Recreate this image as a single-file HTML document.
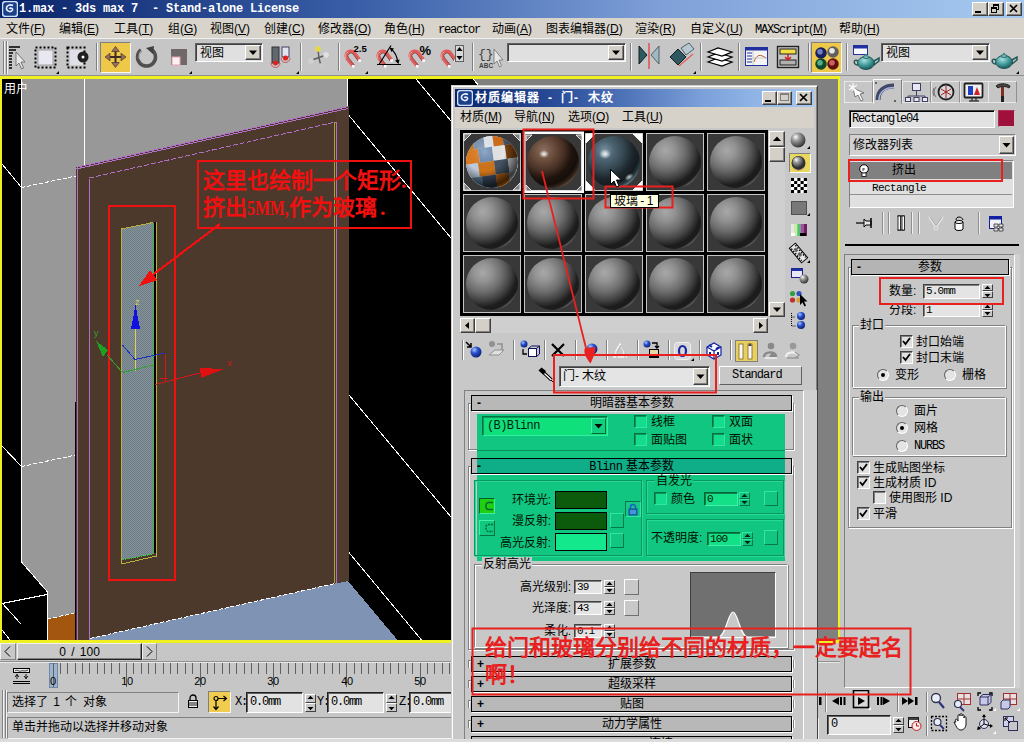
<!DOCTYPE html><html lang="zh-CN"><head><meta charset="utf-8"><title>3ds max</title><style>
*{box-sizing:border-box;margin:0;padding:0}
html,body{width:1024px;height:742px;overflow:hidden;background:#c8c8c8}
body{font-family:"Liberation Sans",sans-serif;font-size:12px;color:#000;position:relative}
#root{position:absolute;left:0;top:0;width:1024px;height:742px;overflow:hidden;background:#c8c8c8}
.a{position:absolute}
.t{position:absolute;white-space:nowrap;font-size:12px;line-height:14px;color:#000}
.m{font-family:"Liberation Mono",monospace;letter-spacing:-1.2px}
.sunk{position:absolute;border:1px solid;border-color:#404040 #fff #fff #404040;background:#e4e4e4}
.rais{position:absolute;border:1px solid;border-color:#fff #404040 #404040 #fff;background:#c8c8c8}
.grp{position:absolute;border:1px solid;border-color:#808080 #fff #fff #808080;box-shadow:inset 1px 1px 0 #fff, 1px 1px 0 #808080}
.hdr{position:absolute;background:#b4b4b4;border:1px solid #000;box-shadow:1px 1px 0 #fff}
.cb{position:absolute;width:13px;height:13px;border:1px solid;border-color:#404040 #fff #fff #404040;background:#e0e0e0;box-shadow:inset 1px 1px 0 #808080}
.rad{position:absolute;width:12px;height:12px;border-radius:50%;border:1px solid;border-color:#606060 #fff #fff #606060;background:#e4e4e4}
</style></head><body><div id="root">
<div class="a" style="left:0;top:0;width:1024px;height:18px;background:linear-gradient(90deg,#0a246a 0%,#3a5fa8 35%,#7fa0d8 65%,#a6caf0 100%)"></div>
<div class="t m" style="left:19px;top:2px;color:#fff;font-weight:bold;font-size:12px;letter-spacing:-0.2px;white-space:pre">1.max - 3ds max 7  - Stand-alone License</div>
<div class="a" style="left:0;top:18px;width:1024px;height:21px;background:#d8d4cc"></div>
<div class="a" style="left:0;top:39px;width:1024px;height:38px;background:#c6c6c6"></div>
<div class="a" style="left:0;top:76px;width:840px;height:567px;background:#f0f020"></div>
<svg class="a" style="left:2px;top:79px" width="836" height="561" viewBox="2 79 836 561" shape-rendering="crispEdges">
<rect x="2" y="79" width="836" height="561" fill="#000"/>
<polygon points="21,79 348,79 348,640 21,640" fill="#989898"/>
<polygon points="21,562 47,592 47,640 21,640" fill="#000"/>
<polygon points="47,619 76,613 76,640 47,640" fill="#a2560f"/>
<polygon points="90,638 335,583 348,581 397.5,640 90,640" fill="#7f94b4"/>
<polygon points="76,167 348.5,106 348.5,581 335,583.5 90,638.5 90,640 76,640" fill="#4c392b"/>
<polygon points="336,109 348.5,106 348.5,581 336,583.5" fill="#503c2e"/>
<rect x="817" y="79" width="21" height="561" fill="#808080"/>
<polygon points="473,79 838,79 838,87 480,87" fill="#808080"/><path d="M473,79L480,87" stroke="#fff"/>
<g stroke="#fff" stroke-width="1" fill="none">
<path d="M21.5,79V562 M84.5,79V165 M347.5,79V106"/>
<path d="M2,164L21.5,187.5 M2,446L21.5,466.5 M21.5,562L47.5,592V640 M2,603.5L47,594.5 M2,603L21,624 M2,630L10,640"/>
<path d="M416,79L451,121 M349,115.5L451,238 M349,395L451,517 M349,552.5L421.5,640"/>
<path d="M21.5,187.5L76,176 M21.5,466.5L76,455 M47,619L76,613 M90,638.5L335,583.5" stroke-dasharray="4 2"/>
</g>
<g stroke="#b070c8" stroke-width="1" fill="none">
<path d="M77.5,640V167L348.5,106.5 M76,169L348,108.5"/>
<path d="M89.5,640V178.5"/>
<path d="M89.5,178L335.5,122" stroke-dasharray="5 2"/>
<path d="M336.5,122V583"/>
</g>
<path d="M334.5,122V583" stroke="#b0a030" stroke-width="1" fill="none"/>
<path d="M75.5,402V640" stroke="#000" stroke-width="1" fill="none"/>
<defs><pattern id="dith" width="2" height="2" patternUnits="userSpaceOnUse"><rect width="2" height="2" fill="#84929a"/><rect width="1" height="1" fill="#6e7c86"/><rect x="1" y="1" width="1" height="1" fill="#6e7c86"/></pattern></defs>
<polygon points="121,229 153.5,222.5 153.5,554 121,560" fill="url(#dith)"/>
<path d="M121.5,564V229L153,222.5 M121.5,564L156.5,556V222" stroke="#b8b040" stroke-width="1" fill="none"/>
<path d="M154.8,222V553" stroke="#000" stroke-width="1.6" fill="none"/>
<path d="M153.5,224V554L122,560" stroke="#20e020" stroke-width="1" stroke-dasharray="1 1" fill="none"/>
<rect x="109" y="205.500" width="66" height="374" stroke="#f01010" stroke-width="2" fill="none"/>
<rect x="197.5" y="160.5" width="213.500" height="67.500" stroke="#f01010" stroke-width="2" fill="none"/>
<path d="M220,224L146,280" stroke="#f01010" stroke-width="2.200" fill="none"/>
<polygon points="139,286 150,270 157,280" fill="#f01010"/>
<path d="M135.5,329V371" stroke="#e0d050" stroke-width="1.200" fill="none"/>
<polygon points="135.5,305 131,329 140,329" fill="#1010e0"/>
<path d="M122.5,345L135,359.500L165,353" stroke="#2030c0" stroke-width="1" fill="none"/>
<path d="M107,355L122.500,372.500L153,365" stroke="#30a030" stroke-width="1" fill="none"/>
<polygon points="96,341 108,350 103,357" fill="#20a020"/>
<path d="M155,384.500L200,373 M165,354V382 M160,378H168" stroke="#d01818" stroke-width="1" fill="none"/>
<polygon points="224,369 200,368 201,378" fill="#e01010"/>
</svg>
<div class="t" style="left:4px;top:82px;color:#fff">用户</div>
<div class="t" style="left:135px;top:295px;color:#e0d050;font-size:9px">z</div>
<div class="t" style="left:94px;top:326px;color:#30a030;font-size:9px">y</div>
<div class="t" style="left:227px;top:356px;color:#d01818;font-size:9px">x</div>
<div class="t" style="left:203px;top:168px;font-family:'Liberation Serif',serif;font-weight:bold;color:#f01010;font-size:22px;line-height:26px">这里也绘制一个矩形.</div>
<div class="t" style="left:203px;top:195px;font-family:'Liberation Serif',serif;font-weight:bold;color:#f01010;font-size:22px;line-height:26px">挤出<span style="display:inline-block;transform:scaleX(0.72);transform-origin:0 0;margin-right:-16px">5MM,</span>作为玻璃<span style="margin-left:3px">.</span></div>
<div class="a" style="left:0;top:643px;width:840px;height:99px;background:#c6c6c6"></div>
<div class="a" style="left:840px;top:688px;width:184px;height:54px;background:#c6c6c6"></div>
<div class="rais" style="left:0;top:643px;width:16px;height:17px;border-color:#f0f0f0 #808080 #808080 #f0f0f0"></div>
<div class="rais" style="left:17px;top:643px;width:125px;height:17px;border-color:#f0f0f0 #202020 #202020 #f0f0f0;box-shadow:inset -1px -1px 0 #808080"></div>
<div class="rais" style="left:142px;top:643px;width:15px;height:17px;border-color:#f0f0f0 #808080 #808080 #f0f0f0"></div>
<div class="t" style="left:17px;top:645px;width:125px;text-align:center;word-spacing:2px">0 / 100</div>
<svg class="a" style="left:0;top:643px" width="160" height="17"><path d="M10,3.500L5,8.500 10,13.500 M147,3.500L152,8.500 147,13.500" stroke="#000" stroke-width="1" fill="none"/></svg>
<div class="a" style="left:0;top:661px;width:840px;height:1px;background:#909090"></div>
<div class="a" style="left:0;top:662px;width:840px;height:1px;background:#e8e8e8"></div>
<svg class="a" style="left:0;top:662px" width="460" height="30" viewBox="0 662 460 30">
<rect x="49.500" y="663.500" width="8" height="24" fill="#9cb4cc" stroke="#7088a8"/>
<path d="M53.5,663V687 M60.5,663V674 M67.5,663V674 M75.5,663V674 M82.5,663V674 M89.5,663V674 M97.5,663V674 M104.5,663V674 M111.5,663V674 M119.5,663V674 M126.5,663V687 M133.5,663V674 M141.5,663V674 M148.5,663V674 M155.5,663V674 M163.5,663V674 M170.5,663V674 M177.5,663V674 M185.5,663V674 M192.5,663V674 M200.5,663V687 M207.5,663V674 M214.5,663V674 M222.5,663V674 M229.5,663V674 M236.5,663V674 M244.5,663V674 M251.5,663V674 M258.5,663V674 M266.5,663V674 M273.5,663V687 M280.5,663V674 M288.5,663V674 M295.5,663V674 M302.5,663V674 M310.5,663V674 M317.5,663V674 M324.5,663V674 M332.5,663V674 M339.5,663V674 M346.5,663V687 M354.5,663V674 M361.5,663V674 M368.5,663V674 M376.5,663V674 M383.5,663V674 M390.5,663V674 M398.5,663V674 M405.5,663V674 M412.5,663V674 M420.5,663V687 M427.5,663V674 M434.5,663V674 M442.5,663V674 M449.5,663V674 M456.5,663V674" stroke="#606060" stroke-width="1"/>
<rect x="13.500" y="668.500" width="16" height="4" fill="#e8e8e8" stroke="#000"/><path d="M15,671c2,-2 4,1 6,0 2,-1 4,1 7,-1" stroke="#000" stroke-width="0.700" fill="none"/><path d="M13,681.500h17 M13,683.500h17" stroke="#000"/><path d="M17,674v5 M15,677l2,-2.500 2,2.500 M26,674v5 M24,676l2,2.500 2,-2.500" stroke="#000" stroke-width="0.900" fill="none"/>
</svg>
<div class="t" style="left:38px;top:674px;width:30px;text-align:center;font-size:11px;letter-spacing:-0.3px">0</div>
<div class="t" style="left:112px;top:674px;width:30px;text-align:center;font-size:11px;letter-spacing:-0.3px">10</div>
<div class="t" style="left:185px;top:674px;width:30px;text-align:center;font-size:11px;letter-spacing:-0.3px">20</div>
<div class="t" style="left:258px;top:674px;width:30px;text-align:center;font-size:11px;letter-spacing:-0.3px">30</div>
<div class="t" style="left:332px;top:674px;width:30px;text-align:center;font-size:11px;letter-spacing:-0.3px">40</div>
<div class="t" style="left:405px;top:674px;width:30px;text-align:center;font-size:11px;letter-spacing:-0.3px">50</div>
<svg class="a" style="left:0;top:689px" width="8" height="52"><path d="M2.500,1v48 M5.500,1v48" stroke="#808080"/><path d="M3.500,1v48 M6.500,1v48" stroke="#f4f4f4"/></svg>
<div class="sunk" style="left:7px;top:692px;width:172px;height:21px;background:#c6c6c6;border-color:#808080 #f4f4f4 #f4f4f4 #808080"></div>
<div class="t" style="left:12px;top:695px;word-spacing:2px">选择了 1 个 对象</div>
<div class="sunk" style="left:7px;top:717px;width:812px;height:22px;background:#c6c6c6;border-color:#808080 #f4f4f4 #f4f4f4 #808080"></div>
<div class="t" style="left:12px;top:720px">单击并拖动以选择并移动对象</div>
<svg class="a" style="left:186px;top:694px" width="14" height="16"><path d="M4,6v-2a3,3 0 0 1 6,0v2" stroke="#000" stroke-width="1.300" fill="none"/><rect x="2.500" y="6.500" width="9" height="7" fill="#f0f0f0" stroke="#000"/><path d="M3,9h8 M3,11h8" stroke="#000" stroke-width="0.900"/></svg>
<div class="a" style="left:208px;top:691px;width:23px;height:22px;background:#f0cc50;border:1px solid;border-color:#808080 #f8f8f8 #f8f8f8 #808080"></div>
<svg class="a" style="left:208px;top:691px" width="23" height="22"><circle cx="8" cy="7.500" r="2" fill="none" stroke="#000" stroke-width="1.200"/><path d="M10,7.500h8 M15.500,5l3,2.500 -3,2.500 M8,10v8 M5.500,15.500l2.500,3 2.500,-3" stroke="#000" stroke-width="1.200" fill="none"/></svg>
<div class="t m" style="left:235px;top:695px;font-size:12px">X:</div>
<div class="sunk" style="left:246px;top:692px;width:57px;height:21px;background:#e2e2e2;border-color:#202020 #fff #fff #202020;box-shadow:inset 1px 1px 0 #606060"></div>
<div class="t m" style="left:250px;top:695px">0.0mm</div>
<div class="a" style="left:305px;top:694px;width:11px;height:9px;background:#c8c8c8;border:1px solid;border-color:#fff #404040 #404040 #fff"></div>
<div class="a" style="left:305px;top:703px;width:11px;height:9px;background:#c8c8c8;border:1px solid;border-color:#fff #404040 #404040 #fff"></div>
<svg class="a" style="left:305px;top:694px" width="11" height="18"><polygon points="5.500,1.800 8.500,5 2.500,5" fill="#000"/><polygon points="5.500,16.2 8.500,13 2.500,13" fill="#000"/></svg>
<div class="t m" style="left:317px;top:695px;font-size:12px">Y:</div>
<div class="sunk" style="left:327px;top:692px;width:57px;height:21px;background:#e2e2e2;border-color:#202020 #fff #fff #202020;box-shadow:inset 1px 1px 0 #606060"></div>
<div class="t m" style="left:331px;top:695px">0.0mm</div>
<div class="a" style="left:386px;top:694px;width:11px;height:9px;background:#c8c8c8;border:1px solid;border-color:#fff #404040 #404040 #fff"></div>
<div class="a" style="left:386px;top:703px;width:11px;height:9px;background:#c8c8c8;border:1px solid;border-color:#fff #404040 #404040 #fff"></div>
<svg class="a" style="left:386px;top:694px" width="11" height="18"><polygon points="5.500,1.800 8.500,5 2.500,5" fill="#000"/><polygon points="5.500,16.2 8.500,13 2.500,13" fill="#000"/></svg>
<div class="t m" style="left:399px;top:695px;font-size:12px">Z:</div>
<div class="sunk" style="left:409px;top:692px;width:60px;height:21px;background:#e2e2e2;border-color:#202020 #fff #fff #202020;box-shadow:inset 1px 1px 0 #606060"></div>
<div class="t m" style="left:413px;top:695px">0.0mm</div>
<div class="a" style="left:471px;top:694px;width:11px;height:9px;background:#c8c8c8;border:1px solid;border-color:#fff #404040 #404040 #fff"></div>
<div class="a" style="left:471px;top:703px;width:11px;height:9px;background:#c8c8c8;border:1px solid;border-color:#fff #404040 #404040 #fff"></div>
<svg class="a" style="left:471px;top:694px" width="11" height="18"><polygon points="5.500,1.800 8.500,5 2.500,5" fill="#000"/><polygon points="5.500,16.2 8.500,13 2.500,13" fill="#000"/></svg>
<svg class="a" style="left:818px;top:688px" width="206" height="54" viewBox="818 688 206 54">
<path d="M825.5,692v20" stroke="#808080"/><path d="M826.5,692v20" stroke="#f4f4f4"/>
<path d="M897.5,692v20" stroke="#808080"/><path d="M898.5,692v20" stroke="#f4f4f4"/>
<path d="M926.5,692v20" stroke="#808080"/><path d="M927.5,692v20" stroke="#f4f4f4"/>
<path d="M926.5,716v20" stroke="#808080"/><path d="M927.5,716v20" stroke="#f4f4f4"/>
<rect x="819" y="697" width="2.500" height="8" fill="#000"/>
<path d="M832,701l7,-4v8z" fill="#000"/><rect x="840" y="697" width="2" height="8" fill="#000"/><rect x="843.500" y="697" width="2" height="8" fill="#000"/>
<rect x="853.500" y="690.500" width="15" height="17" fill="#d8d8d8" stroke="#000" stroke-width="1.600"/><path d="M858,697v8l7,-4z" fill="#000"/><path d="M871,707v3h-3z" fill="#fff"/>
<rect x="877" y="697" width="2" height="8" fill="#000"/><rect x="880.500" y="697" width="2" height="8" fill="#000"/><path d="M890,701l-7,-4v8z" fill="#000"/>
<path d="M902,697v8l6,-4z M908,697v8l6,-4z" fill="#000"/><rect x="915" y="697" width="2.500" height="8" fill="#000"/>
<rect x="908.500" y="717.500" width="10" height="10" fill="#f0f0f0" stroke="#000"/><rect x="908.500" y="717.500" width="10" height="2.500" fill="#404040"/><circle cx="916.500" cy="726" r="4.500" fill="#f8e8e8" stroke="#c02020"/><path d="M916.500,723v3h2.500" stroke="#c02020" fill="none"/>
<circle cx="936" cy="698" r="4.500" fill="#e8eef8" stroke="#303050" stroke-width="1.300"/><path d="M939,702l5,6" stroke="#303080" stroke-width="2.200"/>
<rect x="957.500" y="693.500" width="13" height="11" fill="#e8e0e0" stroke="#a03030"/><path d="M964,693v12 M957,699h14" stroke="#a03030"/><circle cx="958" cy="704" r="3.500" fill="#e8eef8" stroke="#303050" stroke-width="1.200"/><path d="M960,707l4,4" stroke="#303080" stroke-width="1.800"/>
<path d="M978,696v-3h3 M992,696v-3h-3 M978,707v3h3 M992,707v3h-3" stroke="#000" stroke-width="1.300" fill="none"/><path d="M980,697l3,-2.500h8v8l-3,2.500h-8z" fill="#c8c8e8" stroke="#303060"/><path d="M980,697h8v8 M988,697l3,-2.500" stroke="#303060" fill="none"/><path d="M996,708v3h-3z" fill="#fff"/>
<rect x="1003.500" y="693.500" width="13" height="11" fill="#e8e0e0" stroke="#a03030"/><path d="M1010,693v12 M1003,699h14" stroke="#a03030"/><path d="M1001,702l2,-2h7v7l-2,2h-7z" fill="#c8c8e8" stroke="#303060"/><path d="M1020,708v3h-3z" fill="#fff"/>
<rect x="931.500" y="716.500" width="15" height="14" fill="none" stroke="#000" stroke-dasharray="2 1.500" stroke-width="1.300"/><circle cx="937.500" cy="722" r="3.500" fill="#e8eef8" stroke="#303050" stroke-width="1.200"/><path d="M940,725l4,4" stroke="#303080" stroke-width="1.800"/>
<path d="M956,722c-2,-3 1,-4 2,-1v-5c0,-2 2,-2 2,0v-1c0,-2 2,-2 2,0v1c0,-2 2,-2 2,0v2c0,-2 2,-2 2,0v6c0,3 -2,6 -5,6s-4,-2 -7,-8z" fill="#fff" stroke="#000" stroke-width="0.900"/>
<circle cx="984" cy="724" r="4.500" fill="#e0e0f0" stroke="#303060"/><path d="M984,715v9l7,2 M984,724l-5,4" stroke="#000" stroke-width="1" fill="none"/><path d="M982,717l2,-3 2,3z M990,724l3,2 -3,2z M978,726l-1,4 4,-1z" fill="#000"/><path d="M996,731v3h-3z" fill="#fff"/>
<rect x="1003.500" y="716.500" width="10" height="10" fill="#d0d0e8" stroke="#303060"/><rect x="1008.500" y="721.500" width="9" height="9" fill="#c6c6c6" stroke="#303060"/><path d="M1005,718l5,5 M1005,721v-3h3" stroke="#000" fill="none"/>
</svg>
<div class="sunk" style="left:827px;top:715px;width:64px;height:20px;background:#e2e2e2;border-color:#202020 #fff #fff #202020;box-shadow:inset 1px 1px 0 #606060"></div>
<div class="t m" style="left:831px;top:717px">0</div>
<div class="a" style="left:893px;top:717px;width:11px;height:8px;background:#c8c8c8;border:1px solid;border-color:#fff #404040 #404040 #fff"></div>
<div class="a" style="left:893px;top:725px;width:11px;height:8px;background:#c8c8c8;border:1px solid;border-color:#fff #404040 #404040 #fff"></div>
<svg class="a" style="left:893px;top:717px" width="11" height="16"><polygon points="5.500,1.800 8.500,5 2.500,5" fill="#000"/><polygon points="5.500,14.2 8.500,11 2.500,11" fill="#000"/></svg>
<div class="a" style="left:0;top:739px;width:1024px;height:3px;background:#dcdcdc;z-index:5"></div>
<div class="a" style="left:451px;top:85px;width:367px;height:660px;background:#c8c8c8;border:1px solid;border-color:#d4d0c8 #404040 #404040 #d4d0c8;box-shadow:inset 1px 1px 0 #fff,inset -1px -1px 0 #808080"></div>
<div class="a" style="left:455px;top:89px;width:359px;height:18px;background:linear-gradient(90deg,#0a246a 0%,#2c4f9c 30%,#7da2dc 70%,#a6caf0 100%)"></div>
<div class="t" style="left:475px;top:91px;color:#fff;font-weight:bold;letter-spacing:1px">材质编辑器</div>
<div class="t" style="left:548px;top:91px;color:#fff;font-weight:bold;letter-spacing:1px">-</div>
<div class="t" style="left:561px;top:91px;color:#fff;font-weight:bold;letter-spacing:1px">门-</div>
<div class="t" style="left:588px;top:91px;color:#fff;font-weight:bold;letter-spacing:1px">木纹</div>
<svg class="a" style="left:457px;top:90px" width="16" height="16" viewBox="0 0 16 16"><rect x="0.5" y="0.5" width="15" height="15" rx="3" fill="#1c3f8a" stroke="#cfe0f8" stroke-width="1.5"/><path d="M11,4.500C8,3 4,4.500 4.500,8C5,11 9.500,11.500 10.500,9C11,7 8,6.500 7.500,8" stroke="#e8f0ff" stroke-width="1.600" fill="none"/></svg>
<div class="a" style="left:762px;top:91px;width:15px;height:14px;background:#d4d0c8;border:1px solid;border-color:#fff #404040 #404040 #fff;box-shadow:inset -1px -1px 0 #808080"></div>
<div class="a" style="left:765px;top:100px;width:6px;height:2px;background:#000"></div>
<div class="a" style="left:777px;top:91px;width:15px;height:14px;background:#d4d0c8;border:1px solid;border-color:#fff #404040 #404040 #fff;box-shadow:inset -1px -1px 0 #808080"></div>
<div class="a" style="left:780px;top:93px;width:9px;height:8px;border:1px solid #808080;border-top-width:2px"></div>
<div class="a" style="left:796px;top:91px;width:16px;height:14px;background:#d4d0c8;border:1px solid;border-color:#fff #404040 #404040 #fff;box-shadow:inset -1px -1px 0 #808080"></div>
<svg class="a" style="left:796px;top:91px" width="16" height="14"><path d="M4,3L11,10M11,3L4,10" stroke="#000" stroke-width="1.700"/></svg>
<div class="a" style="left:455px;top:107px;width:359px;height:21px;background:#d6d2ca"></div>
<div class="t" style="left:460px;top:110px">材质(<u>M</u>)</div>
<div class="t" style="left:514px;top:110px">导航(<u>N</u>)</div>
<div class="t" style="left:568px;top:110px">选项(<u>O</u>)</div>
<div class="t" style="left:622px;top:110px">工具(<u>U</u>)</div>
<div class="a" style="left:460px;top:130px;width:308px;height:186px;background:#000"></div>
<svg class="a" style="left:460px;top:130px" width="308" height="186" viewBox="460 130 308 186">
<defs>
<radialGradient id="gs" cx="0.32" cy="0.28" r="0.9"><stop offset="0" stop-color="#a8a8a8"/><stop offset="0.2" stop-color="#929292"/><stop offset="0.42" stop-color="#6c6c6c"/><stop offset="0.6" stop-color="#424242"/><stop offset="0.74" stop-color="#1c1c1c"/><stop offset="0.82" stop-color="#1c1c1c"/><stop offset="0.875" stop-color="#6e6e6e"/></radialGradient>
<radialGradient id="gb" cx="0.32" cy="0.28" r="0.9"><stop offset="0" stop-color="#8c6e5e"/><stop offset="0.2" stop-color="#6e5040"/><stop offset="0.42" stop-color="#4a3226"/><stop offset="0.6" stop-color="#20140e"/><stop offset="0.74" stop-color="#160e0a"/><stop offset="0.82" stop-color="#36261c"/><stop offset="0.875" stop-color="#6a5040"/></radialGradient>
<radialGradient id="gg" cx="0.32" cy="0.28" r="0.9"><stop offset="0" stop-color="#7890a0"/><stop offset="0.2" stop-color="#4c6472"/><stop offset="0.42" stop-color="#34464f"/><stop offset="0.6" stop-color="#1c262c"/><stop offset="0.74" stop-color="#141c20"/><stop offset="0.82" stop-color="#2c4048"/><stop offset="0.875" stop-color="#6a8894"/></radialGradient>
<radialGradient id="gsh" cx="0.36" cy="0.30" r="0.75"><stop offset="0" stop-color="#fff" stop-opacity="0.25"/><stop offset="0.5" stop-color="#000" stop-opacity="0.05"/><stop offset="0.9" stop-color="#000" stop-opacity="0.7"/><stop offset="1" stop-color="#000" stop-opacity="0.45"/></radialGradient>
<radialGradient id="hl" cx="0.5" cy="0.5" r="0.5"><stop offset="0" stop-color="#fff" stop-opacity="0.95"/><stop offset="1" stop-color="#fff" stop-opacity="0"/></radialGradient>
<clipPath id="c1"><circle cx="492" cy="162" r="26"/></clipPath>
</defs>
<rect x="463.5" y="133.5" width="57" height="57" fill="#383838" stroke="#c4c4c4" stroke-width="1"/>
<g clip-path="url(#c1)"><rect x="463" y="133" width="58" height="58" fill="#cfd6de"/>
<g transform="rotate(-8 492 162)">
<rect x="462" y="130" width="14" height="17" fill="#d87818"/>
<rect x="476" y="130" width="11" height="17" fill="#8098b8"/>
<rect x="487" y="130" width="9" height="17" fill="#eef2fa"/>
<rect x="496" y="130" width="10" height="17" fill="#d87018"/>
<rect x="506" y="130" width="14" height="17" fill="#506078"/>
<rect x="462" y="147" width="18" height="14" fill="#e88020"/>
<rect x="480" y="147" width="14" height="14" fill="#6f8fb8"/>
<rect x="494" y="147" width="13" height="14" fill="#f2f2f2"/>
<rect x="507" y="147" width="13" height="14" fill="#8a4a10"/>
<rect x="462" y="161" width="16" height="14" fill="#c8d6ea"/>
<rect x="478" y="161" width="16" height="14" fill="#d87818"/>
<rect x="494" y="161" width="14" height="14" fill="#485868"/>
<rect x="508" y="161" width="12" height="14" fill="#d0d4d8"/>
<rect x="462" y="175" width="18" height="16" fill="#6888a8"/>
<rect x="480" y="175" width="14" height="16" fill="#405068"/>
<rect x="494" y="175" width="13" height="16" fill="#c86810"/>
<rect x="507" y="175" width="13" height="16" fill="#a8b0b8"/>
</g><circle cx="492" cy="162" r="26" fill="url(#gsh)"/></g>
<rect x="524.5" y="133.5" width="57" height="57" fill="#383838" stroke="#c4c4c4" stroke-width="1"/>
<circle cx="553" cy="162" r="26" fill="url(#gb)"/>
<ellipse cx="544" cy="154" rx="5" ry="4" fill="url(#hl)"/>
<rect x="585.5" y="133.5" width="57" height="57" fill="#383838" stroke="#c4c4c4" stroke-width="1"/>
<circle cx="614" cy="162" r="26" fill="url(#gg)"/>
<ellipse cx="605" cy="154" rx="6" ry="5" fill="url(#hl)"/>
<ellipse cx="629" cy="177" rx="5" ry="3" fill="url(#hl)" opacity="0.8" transform="rotate(-35 629 177)"/>
<rect x="646.5" y="133.5" width="57" height="57" fill="#383838" stroke="#c4c4c4" stroke-width="1"/>
<circle cx="675" cy="162" r="26" fill="url(#gs)"/>
<rect x="707.5" y="133.5" width="57" height="57" fill="#383838" stroke="#c4c4c4" stroke-width="1"/>
<circle cx="736" cy="162" r="26" fill="url(#gs)"/>
<rect x="463.5" y="194.5" width="57" height="57" fill="#383838" stroke="#c4c4c4" stroke-width="1"/>
<circle cx="492" cy="223" r="26" fill="url(#gs)"/>
<rect x="524.5" y="194.5" width="57" height="57" fill="#383838" stroke="#c4c4c4" stroke-width="1"/>
<circle cx="553" cy="223" r="26" fill="url(#gs)"/>
<rect x="585.5" y="194.5" width="57" height="57" fill="#383838" stroke="#c4c4c4" stroke-width="1"/>
<circle cx="614" cy="223" r="26" fill="url(#gs)"/>
<rect x="646.5" y="194.5" width="57" height="57" fill="#383838" stroke="#c4c4c4" stroke-width="1"/>
<circle cx="675" cy="223" r="26" fill="url(#gs)"/>
<rect x="707.5" y="194.5" width="57" height="57" fill="#383838" stroke="#c4c4c4" stroke-width="1"/>
<circle cx="736" cy="223" r="26" fill="url(#gs)"/>
<rect x="463.5" y="255.5" width="57" height="57" fill="#383838" stroke="#c4c4c4" stroke-width="1"/>
<circle cx="492" cy="284" r="26" fill="url(#gs)"/>
<rect x="524.5" y="255.5" width="57" height="57" fill="#383838" stroke="#c4c4c4" stroke-width="1"/>
<circle cx="553" cy="284" r="26" fill="url(#gs)"/>
<rect x="585.5" y="255.5" width="57" height="57" fill="#383838" stroke="#c4c4c4" stroke-width="1"/>
<circle cx="614" cy="284" r="26" fill="url(#gs)"/>
<rect x="646.5" y="255.5" width="57" height="57" fill="#383838" stroke="#c4c4c4" stroke-width="1"/>
<circle cx="675" cy="284" r="26" fill="url(#gs)"/>
<rect x="707.5" y="255.5" width="57" height="57" fill="#383838" stroke="#c4c4c4" stroke-width="1"/>
<circle cx="736" cy="284" r="26" fill="url(#gs)"/>
<path d="M464,134h7l-7,7z M520,134h-7l7,7z M464,190h7l-7,-7z M520,190h-7l7,-7z" fill="#808080" stroke="#fff" stroke-width="0.800"/>
<path d="M586,134h9l-9,9z M642,134h-9l9,9z M586,190h9l-9,-9z M642,190h-9l9,-9z" fill="#fff" stroke="#fff" stroke-width="0.800"/>
<rect x="524.250" y="132.750" width="58.500" height="59" fill="none" stroke="#fff" stroke-width="2.500"/>
<path d="M526,135h6l-6,6z M582,135h-6l6,6z M526,191h6l-6,-6z M582,191h-6l6,-6z" fill="#808080" stroke="#fff" stroke-width="0.800"/>
</svg>
<div class="a" style="left:769px;top:131px;width:16px;height:186px;background:#cfcfcf"></div>
<div class="a" style="left:769px;top:131px;width:16px;height:16px;background:#d4d0c8;border:1px solid;border-color:#fff #404040 #404040 #fff;box-shadow:inset -1px -1px 0 #808080"></div>
<svg class="a" style="left:0;top:0" width="1024" height="742"><polygon points="773,141 781,141 777,136.5" fill="#000"/></svg>
<div class="a" style="left:769px;top:147px;width:16px;height:15px;background:#d4d0c8;border:1px solid;border-color:#fff #404040 #404040 #fff;box-shadow:inset -1px -1px 0 #808080"></div>
<div class="a" style="left:769px;top:302px;width:16px;height:15px;background:#d4d0c8;border:1px solid;border-color:#fff #404040 #404040 #fff;box-shadow:inset -1px -1px 0 #808080"></div>
<svg class="a" style="left:0;top:0" width="1024" height="742"><polygon points="773,307.5 781,307.5 777,312" fill="#000"/></svg>
<div class="a" style="left:460px;top:318px;width:308px;height:15px;background:#cfcfcf"></div>
<div class="a" style="left:460px;top:318px;width:15px;height:15px;background:#d4d0c8;border:1px solid;border-color:#fff #404040 #404040 #fff;box-shadow:inset -1px -1px 0 #808080"></div>
<svg class="a" style="left:0;top:0" width="1024" height="742"><polygon points="469,322 469,329 465,325.5" fill="#000"/></svg>
<div class="a" style="left:475px;top:318px;width:16px;height:15px;background:#d4d0c8;border:1px solid;border-color:#fff #404040 #404040 #fff;box-shadow:inset -1px -1px 0 #808080"></div>
<div class="a" style="left:753px;top:318px;width:15px;height:15px;background:#d4d0c8;border:1px solid;border-color:#fff #404040 #404040 #fff;box-shadow:inset -1px -1px 0 #808080"></div>
<svg class="a" style="left:0;top:0" width="1024" height="742"><polygon points="759,322 759,329 763,325.5" fill="#000"/></svg>
<div class="a" style="left:789px;top:153px;width:22px;height:20px;background:#e8d860;border:1px solid;border-color:#808080 #fff #fff #808080"></div>
<svg class="a" style="left:786px;top:128px" width="30" height="205" viewBox="786 128 30 205">
<defs><radialGradient id="sg2" cx="0.35" cy="0.3" r="0.8"><stop offset="0" stop-color="#fff"/><stop offset="0.3" stop-color="#a0a0a0"/><stop offset="1" stop-color="#202020"/></radialGradient>
<radialGradient id="bb" cx="0.35" cy="0.3" r="0.8"><stop offset="0" stop-color="#b0c8ff"/><stop offset="0.4" stop-color="#2850d0"/><stop offset="1" stop-color="#081860"/></radialGradient></defs>
<circle cx="798" cy="140" r="7.500" fill="url(#sg2)"/><path d="M810,146v3h-3z" fill="#000"/>
<circle cx="798.500" cy="163" r="7" fill="#303030"/><circle cx="798" cy="162" r="5.500" fill="url(#sg2)"/><path d="M793,168a7,7 0 0 0 11,0" stroke="#d8b070" stroke-width="1.200" fill="none"/>
<rect x="791" y="178" width="3.200" height="3" fill="#000"/>
<rect x="794.2" y="178" width="3.200" height="3" fill="#fff"/>
<rect x="797.4" y="178" width="3.200" height="3" fill="#000"/>
<rect x="800.6" y="178" width="3.200" height="3" fill="#fff"/>
<rect x="803.8" y="178" width="3.200" height="3" fill="#000"/>
<rect x="791" y="181" width="3.200" height="3" fill="#fff"/>
<rect x="794.2" y="181" width="3.200" height="3" fill="#000"/>
<rect x="797.4" y="181" width="3.200" height="3" fill="#fff"/>
<rect x="800.6" y="181" width="3.200" height="3" fill="#000"/>
<rect x="803.8" y="181" width="3.200" height="3" fill="#fff"/>
<rect x="791" y="184" width="3.200" height="3" fill="#000"/>
<rect x="794.2" y="184" width="3.200" height="3" fill="#fff"/>
<rect x="797.4" y="184" width="3.200" height="3" fill="#000"/>
<rect x="800.6" y="184" width="3.200" height="3" fill="#fff"/>
<rect x="803.8" y="184" width="3.200" height="3" fill="#000"/>
<rect x="791" y="187" width="3.200" height="3" fill="#fff"/>
<rect x="794.2" y="187" width="3.200" height="3" fill="#000"/>
<rect x="797.4" y="187" width="3.200" height="3" fill="#fff"/>
<rect x="800.6" y="187" width="3.200" height="3" fill="#000"/>
<rect x="803.8" y="187" width="3.200" height="3" fill="#fff"/>
<rect x="791" y="190" width="3.200" height="3" fill="#000"/>
<rect x="794.2" y="190" width="3.200" height="3" fill="#fff"/>
<rect x="797.4" y="190" width="3.200" height="3" fill="#000"/>
<rect x="800.6" y="190" width="3.200" height="3" fill="#fff"/>
<rect x="803.8" y="190" width="3.200" height="3" fill="#000"/>
<rect x="791.500" y="201.500" width="15" height="13" fill="#787878" stroke="#505050"/><path d="M810,213v3h-3z" fill="#000"/>
<rect x="791" y="224" width="3.200" height="12" fill="#e8e8e8"/>
<rect x="794.2" y="224" width="3.200" height="12" fill="#c8f0a0"/>
<rect x="797.4" y="224" width="3.200" height="12" fill="#50c070"/>
<rect x="800.6" y="224" width="3.200" height="12" fill="#a050a0"/>
<rect x="803.8" y="224" width="3.200" height="12" fill="#702060"/>
<rect x="800" y="233" width="6" height="3" fill="#000"/><rect x="791" y="233" width="4" height="3" fill="#fff"/>
<g transform="translate(798.500,253) rotate(-40)"><rect x="-4" y="-9.500" width="8" height="19" fill="#e8e8e8" stroke="#000" stroke-width="1"/><path d="M-2.700,-8v16 M2.700,-8v16" stroke="#000" stroke-width="1.500" stroke-dasharray="1.500 1.500"/><rect x="-1.500" y="-6" width="3" height="4" fill="#606060"/><rect x="-1.500" y="0" width="3" height="4" fill="#606060"/></g><path d="M810,260v3h-3z" fill="#000"/>
<rect x="791.500" y="268.500" width="11" height="9" fill="#e8e8f8" stroke="#202080"/><rect x="791.500" y="268.500" width="11" height="2.500" fill="#2030a0"/><circle cx="804" cy="279" r="4.500" fill="url(#sg2)"/>
<circle cx="792.500" cy="293.500" r="2.600" fill="#30a040"/><circle cx="799" cy="293.500" r="2.600" fill="#3050c0"/><circle cx="792.500" cy="300" r="2.600" fill="#c03030"/><circle cx="799" cy="300" r="2.600" fill="#d0a030"/><path d="M800,294l0,11 2.500,-2.500 2,4 1.500,-1 -2,-4 3.500,0z" fill="#000"/>
<path d="M791.500,313v13h4 M791.500,317h4" stroke="#000" stroke-width="1" stroke-dasharray="1 1" fill="none"/><circle cx="801" cy="316" r="4" fill="url(#bb)"/><circle cx="801" cy="325" r="4" fill="url(#bb)"/>
</svg>
<svg class="a" style="left:456px;top:336px" width="358" height="28" viewBox="456 336 358 28">
<path d="M462.5,340v20" stroke="#808080"/><path d="M463.5,340v20" stroke="#fff"/>
<path d="M513.5,340v20" stroke="#808080"/><path d="M514.5,340v20" stroke="#fff"/>
<path d="M544.5,340v20" stroke="#808080"/><path d="M545.5,340v20" stroke="#fff"/>
<path d="M575.5,340v20" stroke="#808080"/><path d="M576.5,340v20" stroke="#fff"/>
<path d="M606.5,340v20" stroke="#808080"/><path d="M607.5,340v20" stroke="#fff"/>
<path d="M637.5,340v20" stroke="#808080"/><path d="M638.5,340v20" stroke="#fff"/>
<path d="M668.5,340v20" stroke="#808080"/><path d="M669.5,340v20" stroke="#fff"/>
<path d="M699.5,340v20" stroke="#808080"/><path d="M700.5,340v20" stroke="#fff"/>
<path d="M730.5,340v20" stroke="#808080"/><path d="M731.5,340v20" stroke="#fff"/>
<circle cx="476" cy="352" r="5.500" fill="url(#bb)"/><path d="M466,342l5,5 M471,343v4h-4" stroke="#000" stroke-width="1.500" fill="none"/>
<circle cx="492" cy="344" r="3" fill="#909090"/><path d="M489,355l6,-5h9l-5,5z" fill="#e0e0e0" stroke="#909090"/><path d="M497,344h5v6" stroke="#909090" stroke-width="1.500" fill="none"/>
<circle cx="524" cy="344" r="3.500" fill="url(#bb)"/><rect x="528.500" y="348.500" width="8" height="8" fill="#fff" stroke="#101060"/><path d="M528.500,348.500l3,-2.500h8l-3,2.500 M539.500,346v8l-3,2.500" stroke="#101060" fill="none"/><path d="M523,349v5h4" stroke="#000" stroke-width="1.300" fill="none"/>
<path d="M552,344l12,12 M564,344l-12,12" stroke="#000" stroke-width="2.200"/>
<circle cx="592" cy="349" r="5.500" fill="url(#bb)"/>
<path d="M616,357v-6l4,-7 4,7v6 M613,357h14" stroke="#f4f4f4" stroke-width="1.600" fill="none"/><path d="M617,358v-6l4,-7 4,7v6" stroke="#a8a8a8" stroke-width="0.800" fill="none"/>
<circle cx="647" cy="344" r="3.500" fill="url(#bb)"/><rect x="649.500" y="349.500" width="9" height="8" fill="#e8d8a0" stroke="#000"/><rect x="650" y="354" width="8" height="3" fill="#000"/><path d="M652,343h5v5 M655,346l2,2 2,-2" stroke="#000" stroke-width="1.300" fill="none"/>
<rect x="674.500" y="342.500" width="16" height="17" rx="3" fill="#d8d8d8" stroke="#f0f0f0"/><ellipse cx="682.500" cy="351" rx="3.500" ry="5" fill="none" stroke="#1828a0" stroke-width="2.200"/><path d="M694,358v3h-3z" fill="#000"/>
<path d="M707,347l7,-4 7,4v8l-7,4 -7,-4z" fill="#fff" stroke="#1020a0" stroke-width="1.200"/><path d="M707,347l7,4 7,-4 M714,351v8" stroke="#1020a0" stroke-width="1.200" fill="none"/><path d="M709,345l3,2 M716,349l3,-2 M710,352v3 M718,352v3" stroke="#1020a0" stroke-width="2"/>
<rect x="735.500" y="340.500" width="22" height="21" fill="#e8d060" stroke="#808080"/><rect x="739" y="344" width="4" height="15" fill="#f8f8f8" stroke="#806020" stroke-width="0.800"/><rect x="748" y="344" width="4" height="15" fill="#f8f8f8" stroke="#806020" stroke-width="0.800"/><path d="M750,343l-2,3h4z" fill="#404040"/>
<circle cx="771" cy="346" r="3.300" fill="#888"/><path d="M764,357c0,-6 12,-6 12,-1h-5l2,-3" stroke="#888" stroke-width="2.400" fill="none"/><path d="M765,358h12" stroke="#f0f0f0" stroke-width="1.500"/>
<circle cx="793" cy="346" r="3.300" fill="#999"/><path d="M786,357c0,-6 12,-6 12,-1" stroke="#f0f0f0" stroke-width="2.400" fill="none"/><path d="M787,358h12 M795,352l4,3 -4,3" stroke="#999" stroke-width="1.500" fill="none"/>
</svg>
<svg class="a" style="left:537px;top:366px" width="18" height="18" viewBox="0 0 18 18"><path d="M1.500,4.500l3,-3 4.500,3.500 -3,3.500z" fill="#000"/><path d="M6,6l8.500,8" stroke="#000" stroke-width="3.400"/><path d="M7.500,7.500l7,6.500" stroke="#fff" stroke-width="1.300"/><path d="M14,14l2,2" stroke="#000" stroke-width="1"/></svg>
<div class="sunk" style="left:559px;top:366px;width:151px;height:21px;border-color:#606060 #fff #fff #606060;box-shadow:inset 1px 1px 0 #404040"></div>
<div class="t" style="left:563px;top:369px">门- 木纹</div>
<div class="a" style="left:693px;top:368px;width:15px;height:17px;background:#d4d0c8;border:1px solid;border-color:#fff #404040 #404040 #fff;box-shadow:inset -1px -1px 0 #808080"></div>
<svg class="a" style="left:0;top:0" width="1024" height="742"><polygon points="696.5,374.5 704.5,374.5 700.5,379" fill="#000"/></svg>
<div class="rais" style="left:719px;top:366px;width:83px;height:19px;border-color:#fff #606060 #606060 #fff"></div>
<div class="t m" style="left:732px;top:368px;letter-spacing:-1px">Standard</div>
<div class="a" style="left:464px;top:390px;width:340px;height:360px;border:1px solid;border-color:#808080 #fff #fff #808080;background:#c8c8c8"></div>
<div class="a" style="left:804px;top:390px;width:13px;height:352px;background:#d0d0d0"></div>
<div class="a" style="left:468px;top:403px;width:326px;height:47px;border:1px solid #808080;box-shadow:inset 1px 1px 0 #fff,1px 1px 0 #fff"></div>
<div class="a" style="left:468px;top:466px;width:326px;height:184px;border:1px solid #808080;box-shadow:inset 1px 1px 0 #fff,1px 1px 0 #fff"></div>
<div class="a" style="left:477px;top:414px;width:308px;height:147px;background:#10c680"></div>
<div class="hdr" style="left:471px;top:395px;width:321px;height:16px;background:#b8b8b8"></div>
<div class="t" style="left:471px;top:396px;width:321px;text-align:center">明暗器基本参数</div>
<div class="t" style="left:477px;top:396px;font-weight:bold">-</div>
<div class="a" style="left:477px;top:450px;width:308px;height:1px;background:#0a9058"></div>
<div class="hdr" style="left:471px;top:458px;width:321px;height:16px;background:#b8b8b8"></div>
<div class="a" style="left:477px;top:459px;width:308px;height:14px;background:#10ae88"></div>
<div class="t" style="left:471px;top:459px;width:321px;text-align:center"><span class="m" style="letter-spacing:-0.6px">Blinn</span> 基本参数</div>
<div class="t" style="left:477px;top:459px;font-weight:bold">-</div>
<div class="a" style="left:482px;top:416px;width:126px;height:20px;background:#10e07c;border:1px solid;border-color:#087040 #30f0a0 #30f0a0 #087040;box-shadow:inset 1px 1px 0 #0a9858"></div>
<div class="t m" style="left:487px;top:419px;letter-spacing:-0.6px;color:#021">(B)Blinn</div>
<div class="a" style="left:591px;top:418px;width:15px;height:16px;background:#10d080;border:1px solid;border-color:#40f0a8 #086838 #086838 #40f0a8"></div>
<svg class="a" style="left:591px;top:418px" width="15" height="16"><polygon points="3.500,6 11.500,6 7.500,10.500" fill="#000"/></svg>
<div class="a" style="left:634px;top:415px;width:13px;height:13px;background:#14dc8c;border:1px solid;border-color:#087040 #30e8a0 #30e8a0 #087040;box-shadow:inset 1px 1px 0 #0a9858"></div>
<div class="t" style="left:651px;top:415px;color:#010">线框</div>
<div class="a" style="left:634px;top:433px;width:13px;height:13px;background:#14dc8c;border:1px solid;border-color:#087040 #30e8a0 #30e8a0 #087040;box-shadow:inset 1px 1px 0 #0a9858"></div>
<div class="t" style="left:651px;top:433px;color:#010">面贴图</div>
<div class="a" style="left:712px;top:415px;width:13px;height:13px;background:#14dc8c;border:1px solid;border-color:#087040 #30e8a0 #30e8a0 #087040;box-shadow:inset 1px 1px 0 #0a9858"></div>
<div class="t" style="left:729px;top:415px;color:#010">双面</div>
<div class="a" style="left:712px;top:433px;width:13px;height:13px;background:#14dc8c;border:1px solid;border-color:#087040 #30e8a0 #30e8a0 #087040;box-shadow:inset 1px 1px 0 #0a9858"></div>
<div class="t" style="left:729px;top:433px;color:#010">面状</div>
<div class="a" style="left:474px;top:480px;width:168px;height:76px;border:1px solid #0a9860;box-shadow:inset 1px 1px 0 #28d898,1px 1px 0 #28d898"></div>
<div class="a" style="left:646px;top:480px;width:138px;height:34px;border:1px solid #0a9860;box-shadow:inset 1px 1px 0 #28d898,1px 1px 0 #28d898"></div>
<div class="a" style="left:646px;top:519px;width:138px;height:37px;border:1px solid #0a9860;box-shadow:inset 1px 1px 0 #28d898,1px 1px 0 #28d898"></div>
<div class="t" style="left:655px;top:475px;line-height:12px;background:#10c680;padding:0 1px;color:#010">自发光</div>
<div class="a" style="left:479px;top:498px;width:16px;height:16px;background:#20d010;border:1px solid;border-color:#086030 #40f0a0 #40f0a0 #086030"></div>
<div class="a" style="left:479px;top:520px;width:16px;height:16px;background:#10c880;border:1px solid;border-color:#40f0a0 #087040 #087040 #40f0a0"></div>
<svg class="a" style="left:479px;top:498px" width="16" height="40"><path d="M14,4.500H9.500a2.500,2.500 0 0 0 -2.500,2.500v2a2.500,2.500 0 0 0 2.500,2.500H14" stroke="#063" stroke-width="1.400" fill="none"/><path d="M14,26.500H9.500a2.500,2.500 0 0 0 -2.500,2.500v2a2.500,2.500 0 0 0 2.500,2.500H14" stroke="#063" stroke-width="1.400" fill="none" stroke-dasharray="2 1"/></svg>
<div class="t" style="left:480px;top:493px;width:71px;text-align:right;color:#010">环境光:</div>
<div class="t" style="left:480px;top:514px;width:71px;text-align:right;color:#010">漫反射:</div>
<div class="t" style="left:480px;top:536px;width:71px;text-align:right;color:#010">高光反射:</div>
<div class="a" style="left:555px;top:491px;width:52px;height:18px;background:#0c5a0c;border:1px solid #000"></div>
<div class="a" style="left:555px;top:512px;width:52px;height:18px;background:#0c5a0c;border:1px solid #000"></div>
<div class="a" style="left:555px;top:533px;width:52px;height:18px;background:#14e88c;border:1px solid #000"></div>
<div class="a" style="left:610px;top:513px;width:14px;height:15px;background:#10c680;border:1px solid;border-color:#30e8a0 #087848 #087848 #30e8a0"></div>
<div class="a" style="left:610px;top:533px;width:14px;height:15px;background:#10c680;border:1px solid;border-color:#30e8a0 #087848 #087848 #30e8a0"></div>
<div class="a" style="left:764px;top:491px;width:14px;height:15px;background:#10c680;border:1px solid;border-color:#30e8a0 #087848 #087848 #30e8a0"></div>
<div class="a" style="left:764px;top:530px;width:14px;height:15px;background:#10c680;border:1px solid;border-color:#30e8a0 #087848 #087848 #30e8a0"></div>
<div class="a" style="left:625px;top:501px;width:16px;height:16px;background:#18c888;border:1px solid;border-color:#087848 #30e8a0 #30e8a0 #087848"></div>
<svg class="a" style="left:625px;top:501px" width="16" height="16"><path d="M5.500,8v-2a2.500,2.500 0 0 1 5,0v2" stroke="#1860c0" stroke-width="1.500" fill="none"/><rect x="4" y="8" width="8" height="6" fill="#2078c8" stroke="#104890"/><path d="M5,10h6M5,12h6" stroke="#80c0f0" stroke-width="0.800"/></svg>
<div class="a" style="left:654px;top:492px;width:13px;height:13px;background:#14dc8c;border:1px solid;border-color:#087040 #30e8a0 #30e8a0 #087040;box-shadow:inset 1px 1px 0 #0a9858"></div>
<div class="t" style="left:671px;top:492px;color:#010">颜色</div>
<div class="a" style="left:704px;top:492px;width:34px;height:14px;background:#14e088;border:1px solid;border-color:#063 #40f0a8 #40f0a8 #063;box-shadow:inset 1px 1px 0 #0a8050"></div>
<div class="t m" style="left:707px;top:492px;color:#010;letter-spacing:-0.8px;font-size:11px">0</div>
<div class="a" style="left:739px;top:492px;width:11px;height:7px;background:#10c680;border:1px solid;border-color:#30e8a0 #087848 #087848 #30e8a0"></div>
<div class="a" style="left:739px;top:499px;width:11px;height:7px;background:#10c680;border:1px solid;border-color:#30e8a0 #087848 #087848 #30e8a0"></div>
<svg class="a" style="left:739px;top:492px" width="11" height="14"><polygon points="5.500,1.800 8.500,5 2.500,5" fill="#021"/><polygon points="5.500,12.2 8.500,9 2.500,9" fill="#021"/></svg>
<div class="t" style="left:651px;top:531px;color:#010">不透明度:</div>
<div class="a" style="left:707px;top:532px;width:34px;height:14px;background:#14e088;border:1px solid;border-color:#063 #40f0a8 #40f0a8 #063;box-shadow:inset 1px 1px 0 #0a8050"></div>
<div class="t m" style="left:710px;top:532px;color:#010;letter-spacing:-0.8px;font-size:11px">100</div>
<div class="a" style="left:742px;top:532px;width:11px;height:7px;background:#10c680;border:1px solid;border-color:#30e8a0 #087848 #087848 #30e8a0"></div>
<div class="a" style="left:742px;top:539px;width:11px;height:7px;background:#10c680;border:1px solid;border-color:#30e8a0 #087848 #087848 #30e8a0"></div>
<svg class="a" style="left:742px;top:532px" width="11" height="14"><polygon points="5.500,1.800 8.500,5 2.500,5" fill="#021"/><polygon points="5.500,12.2 8.500,9 2.500,9" fill="#021"/></svg>
<div class="grp" style="left:474px;top:564px;width:314px;height:84px"></div>
<div class="t" style="left:482px;top:557px;background:#c8c8c8;padding:0 1px">反射高光</div>
<div class="t" style="left:490px;top:580px;width:81px;text-align:right">高光级别:</div>
<div class="sunk" style="left:574px;top:580px;width:28px;height:14px;box-shadow:inset 1px 1px 0 #808080"></div>
<div class="t m" style="left:577px;top:580px;letter-spacing:-0.8px;font-size:11px">39</div>
<div class="a" style="left:604px;top:580px;width:11px;height:7px;background:#c8c8c8;border:1px solid;border-color:#fff #404040 #404040 #fff"></div>
<div class="a" style="left:604px;top:587px;width:11px;height:7px;background:#c8c8c8;border:1px solid;border-color:#fff #404040 #404040 #fff"></div>
<svg class="a" style="left:604px;top:580px" width="11" height="14"><polygon points="5.500,1.800 8.500,5 2.500,5" fill="#000"/><polygon points="5.500,12.2 8.500,9 2.500,9" fill="#000"/></svg>
<div class="t" style="left:490px;top:601px;width:81px;text-align:right">光泽度:</div>
<div class="sunk" style="left:574px;top:601px;width:28px;height:14px;box-shadow:inset 1px 1px 0 #808080"></div>
<div class="t m" style="left:577px;top:601px;letter-spacing:-0.8px;font-size:11px">43</div>
<div class="a" style="left:604px;top:601px;width:11px;height:7px;background:#c8c8c8;border:1px solid;border-color:#fff #404040 #404040 #fff"></div>
<div class="a" style="left:604px;top:608px;width:11px;height:7px;background:#c8c8c8;border:1px solid;border-color:#fff #404040 #404040 #fff"></div>
<svg class="a" style="left:604px;top:601px" width="11" height="14"><polygon points="5.500,1.800 8.500,5 2.500,5" fill="#000"/><polygon points="5.500,12.2 8.500,9 2.500,9" fill="#000"/></svg>
<div class="t" style="left:490px;top:624px;width:81px;text-align:right">柔化:</div>
<div class="sunk" style="left:574px;top:624px;width:28px;height:14px;box-shadow:inset 1px 1px 0 #808080"></div>
<div class="t m" style="left:577px;top:624px;letter-spacing:-0.8px;font-size:11px">0.1</div>
<div class="a" style="left:604px;top:624px;width:11px;height:7px;background:#c8c8c8;border:1px solid;border-color:#fff #404040 #404040 #fff"></div>
<div class="a" style="left:604px;top:631px;width:11px;height:7px;background:#c8c8c8;border:1px solid;border-color:#fff #404040 #404040 #fff"></div>
<svg class="a" style="left:604px;top:624px" width="11" height="14"><polygon points="5.500,1.800 8.500,5 2.500,5" fill="#000"/><polygon points="5.500,12.2 8.500,9 2.500,9" fill="#000"/></svg>
<div class="rais" style="left:624px;top:579px;width:15px;height:16px;border-color:#fff #707070 #707070 #fff"></div>
<div class="rais" style="left:624px;top:600px;width:15px;height:16px;border-color:#fff #707070 #707070 #fff"></div>
<div class="a" style="left:690px;top:572px;width:86px;height:66px;background:#707070;border:1px solid;border-color:#404040 #fff #fff #404040"></div>
<svg class="a" style="left:691px;top:573px" width="84" height="64" viewBox="691 573 84 64"><path d="M691,637H718C726,637 728,612 733,612C738,612 740,637 748,637H775" fill="#c8c8c8" stroke="#fff" stroke-width="1.200"/></svg>
<div class="a" style="left:468px;top:660px;width:326px;height:8px;border:1px solid #808080;border-bottom:none;box-shadow:inset 1px 1px 0 #fff,1px 0 0 #fff"></div>
<div class="hdr" style="left:471px;top:656px;width:321px;height:16px;background:#b8b8b8"></div>
<div class="t" style="left:471px;top:657px;width:321px;text-align:center">扩展参数</div>
<div class="t" style="left:477px;top:657px;font-weight:bold">+</div>
<div class="a" style="left:468px;top:680px;width:326px;height:8px;border:1px solid #808080;border-bottom:none;box-shadow:inset 1px 1px 0 #fff,1px 0 0 #fff"></div>
<div class="hdr" style="left:471px;top:676px;width:321px;height:16px;background:#b8b8b8"></div>
<div class="t" style="left:471px;top:677px;width:321px;text-align:center">超级采样</div>
<div class="t" style="left:477px;top:677px;font-weight:bold">+</div>
<div class="a" style="left:468px;top:700px;width:326px;height:8px;border:1px solid #808080;border-bottom:none;box-shadow:inset 1px 1px 0 #fff,1px 0 0 #fff"></div>
<div class="hdr" style="left:471px;top:696px;width:321px;height:16px;background:#b8b8b8"></div>
<div class="t" style="left:471px;top:697px;width:321px;text-align:center">贴图</div>
<div class="t" style="left:477px;top:697px;font-weight:bold">+</div>
<div class="a" style="left:468px;top:720px;width:326px;height:8px;border:1px solid #808080;border-bottom:none;box-shadow:inset 1px 1px 0 #fff,1px 0 0 #fff"></div>
<div class="hdr" style="left:471px;top:716px;width:321px;height:16px;background:#b8b8b8"></div>
<div class="t" style="left:471px;top:717px;width:321px;text-align:center">动力学属性</div>
<div class="t" style="left:477px;top:717px;font-weight:bold">+</div>
<div class="a" style="left:468px;top:740px;width:326px;height:8px;border:1px solid #808080;border-bottom:none;box-shadow:inset 1px 1px 0 #fff,1px 0 0 #fff"></div>
<div class="hdr" style="left:471px;top:736px;width:321px;height:16px;background:#b8b8b8"></div>
<div class="t" style="left:471px;top:737px;width:321px;text-align:center">mental ray 连接</div>
<div class="t" style="left:477px;top:737px;font-weight:bold">+</div>
<div class="a" style="left:840px;top:78px;width:184px;height:612px;background:#c6c6c6"></div>
<div class="a" style="left:844px;top:81px;width:29px;height:22px;background:#c6c6c6;border:1px solid;border-color:#e8e8e8 #909090 #e8e8e8 #e8e8e8"></div>
<div class="a" style="left:873px;top:79px;width:29px;height:25px;background:#c6c6c6;border:1px solid;border-color:#fff #808080 #c6c6c6 #fff"></div>
<div class="a" style="left:902px;top:81px;width:29px;height:22px;background:#c6c6c6;border:1px solid;border-color:#e8e8e8 #909090 #e8e8e8 #e8e8e8"></div>
<div class="a" style="left:931px;top:81px;width:29px;height:22px;background:#c6c6c6;border:1px solid;border-color:#e8e8e8 #909090 #e8e8e8 #e8e8e8"></div>
<div class="a" style="left:960px;top:81px;width:29px;height:22px;background:#c6c6c6;border:1px solid;border-color:#e8e8e8 #909090 #e8e8e8 #e8e8e8"></div>
<div class="a" style="left:988px;top:81px;width:29px;height:22px;background:#c6c6c6;border:1px solid;border-color:#e8e8e8 #909090 #e8e8e8 #e8e8e8"></div>
<svg class="a" style="left:840px;top:78px" width="184" height="28" viewBox="840 78 184 28">
<path d="M853,88l2,9 3,-2 3,6 2,-1 -3,-6 4,-1z" fill="#fff" stroke="#606060" stroke-width="0.800"/><path d="M849,85l8,6 M853,83v8 M849,90l8,-5" stroke="#fff" stroke-width="1.200"/>
<path d="M878,100C878,91 884,86 894,86" stroke="#404868" stroke-width="5" fill="none"/><path d="M879,100C879,92 885,87.500 894,87.500" stroke="#a8b4d8" stroke-width="1.600" fill="none"/><path d="M876,82v2 M894,101h2" stroke="#000"/>
<rect x="912.500" y="83.500" width="8" height="7" fill="#e8e8f4" stroke="#404060"/><path d="M916.500,91v5 M908,100v-4h17v4" stroke="#404060" fill="none"/><rect x="905.500" y="97.500" width="5" height="4" fill="#e8e8f4" stroke="#404060"/><rect x="914" y="97.500" width="5" height="4" fill="#e8e8f4" stroke="#404060"/><rect x="922.500" y="97.500" width="5" height="4" fill="#e8e8f4" stroke="#404060"/>
<circle cx="946" cy="92" r="7.500" fill="#d8d8d8" stroke="#202020" stroke-width="1.800"/><path d="M946,86v12 M941,89l10,6 M941,95l10,-6" stroke="#a02020" stroke-width="1"/><path d="M936,87a8,8 0 0 0 0,10 M934,88a8,8 0 0 0 0,8" stroke="#707070" fill="none"/>
<rect x="964.500" y="83.500" width="18" height="14" rx="1" fill="#f0f0f0" stroke="#202020" stroke-width="1.800"/><rect x="968" y="86" width="5" height="9" fill="#2040c0"/><path d="M974,95l3,-8 3,8z" fill="#d02020"/><path d="M969,101h10 M972,98v3 M976,98v3" stroke="#404040" stroke-width="1.500"/>
<path d="M996,86c3,-3 10,-3 14,0l-1,2c-3,-2 -8,-2 -11,0z" fill="#484848" stroke="#202020"/><path d="M1002.500,87v15" stroke="#803020" stroke-width="3"/><path d="M1002.500,96v6" stroke="#202020" stroke-width="3"/>
</svg>
<div class="sunk" style="left:849px;top:110px;width:146px;height:18px;background:#e2e2e2;box-shadow:inset 1px 1px 0 #000"></div>
<div class="t m" style="left:852px;top:112px">Rectangle04</div>
<div class="a" style="left:998px;top:110px;width:17px;height:17px;background:#a0103c;border:1px solid;border-color:#b03050 #c8c8c8 #c8c8c8 #b03050"></div>
<div class="sunk" style="left:849px;top:134px;width:167px;height:22px;background:#d0d0d0;border-color:#808080 #fff #fff #808080"></div>
<div class="t" style="left:853px;top:138px">修改器列表</div>
<div class="a" style="left:999px;top:136px;width:15px;height:18px;background:#d4d0c8;border:1px solid;border-color:#fff #404040 #404040 #fff;box-shadow:inset -1px -1px 0 #808080"></div>
<svg class="a" style="left:0;top:0" width="1024" height="742"><polygon points="1002.5,143 1010.5,143 1006.5,147.5" fill="#000"/></svg>
<div class="sunk" style="left:849px;top:160px;width:165px;height:48px;background:#e0e0e0;border-color:#808080 #fff #fff #808080"></div>
<div class="a" style="left:850px;top:162px;width:162px;height:17px;background:#808080"></div>
<div class="a" style="left:850px;top:194px;width:162px;height:1px;background:#909090"></div>
<div class="t" style="left:892px;top:163px">挤出</div>
<div class="t m" style="left:872px;top:181px;font-size:11px;letter-spacing:-0.6px">Rectangle</div>
<svg class="a" style="left:857px;top:163px" width="14" height="16"><circle cx="7" cy="6" r="4.300" fill="#fff" stroke="#000"/><rect x="5" y="10" width="4" height="3.500" fill="#fff" stroke="#000" stroke-width="0.800"/><path d="M6,5v3 M8,6h-2" stroke="#000" stroke-width="0.700"/></svg>
<div class="a" style="left:848px;top:159px;width:155px;height:23px;border:2px solid #e82020"></div>
<svg class="a" style="left:844px;top:210px" width="176" height="28" viewBox="844 210 176 28">
<path d="M882.5,212v22" stroke="#909090"/><path d="M883.5,212v22" stroke="#f0f0f0"/>
<path d="M888.5,212v22" stroke="#909090"/><path d="M889.5,212v22" stroke="#f0f0f0"/>
<path d="M911.5,212v22" stroke="#909090"/><path d="M912.5,212v22" stroke="#f0f0f0"/>
<path d="M918.5,212v22" stroke="#909090"/><path d="M919.5,212v22" stroke="#f0f0f0"/>
<path d="M978.5,212v22" stroke="#909090"/><path d="M979.5,212v22" stroke="#f0f0f0"/>
<path d="M856,223h8" stroke="#000" stroke-width="1.200"/><path d="M864,219v8l2,-2h5v-4h-5z" fill="#e8e8e8" stroke="#000"/><path d="M871,218v10" stroke="#000" stroke-width="1.500"/>
<path d="M897.500,216h7 M897.500,230h7" stroke="#000"/><rect x="898" y="216" width="2.500" height="14" fill="#fff" stroke="#000" stroke-width="0.800"/><rect x="902" y="216" width="2.500" height="14" fill="#fff" stroke="#000" stroke-width="0.800"/>
<path d="M929,217l6,9 M943,217l-6,9" stroke="#e8e8e8" stroke-width="1.600"/><path d="M930,217l6,9 M942,217l-6,9" stroke="#a0a0a0" stroke-width="0.800"/><circle cx="936" cy="228" r="2" fill="none" stroke="#e8e8e8"/>
<path d="M955,222v7a4,1.500 0 0 0 8,0v-7" fill="#fff" stroke="#000"/><ellipse cx="959" cy="222" rx="4" ry="1.500" fill="#fff" stroke="#000"/><path d="M956,220c0,-4 6,-4 7,0" stroke="#000" fill="none"/>
<rect x="989.500" y="216.500" width="12" height="12" fill="#f0f0f8" stroke="#1020a0"/><rect x="989.500" y="216.500" width="12" height="3" fill="#1020a0"/><path d="M994,224h4v3h-4z M999,224h4v3h-4z M994,228h4v3h-4z M999,228h4v3h-4z" fill="#e0e0e0" stroke="#303030" stroke-width="0.800"/>
</svg>
<div class="a" style="left:845px;top:244px;width:174px;height:2px;background:#000"></div>
<div class="a" style="left:844px;top:254px;width:171px;height:434px;border:1px solid;border-color:#808080 #fff #fff #808080;background:#c8c8c8"></div>
<div class="a" style="left:1015px;top:254px;width:5px;height:434px;background:#d0d0d0"></div>
<div class="a" style="left:848px;top:267px;width:164px;height:261px;border:1px solid #808080;box-shadow:inset 1px 1px 0 #fff,1px 1px 0 #fff"></div>
<div class="hdr" style="left:851px;top:259px;width:158px;height:16px;background:#b4b4b4"></div>
<div class="t" style="left:851px;top:260px;width:158px;text-align:center">参数</div>
<div class="t" style="left:857px;top:260px;font-weight:bold">-</div>
<div class="t" style="left:889px;top:284px">数量:</div>
<div class="sunk" style="left:923px;top:284px;width:57px;height:15px;box-shadow:inset 1px 1px 0 #808080"></div>
<div class="t m" style="left:926px;top:284px;letter-spacing:-0.8px;font-size:11px">5.0mm</div>
<div class="a" style="left:982px;top:284px;width:11px;height:7px;background:#c8c8c8;border:1px solid;border-color:#fff #404040 #404040 #fff"></div>
<div class="a" style="left:982px;top:291px;width:11px;height:7px;background:#c8c8c8;border:1px solid;border-color:#fff #404040 #404040 #fff"></div>
<svg class="a" style="left:982px;top:284px" width="11" height="15"><polygon points="5.500,1.800 8.500,5 2.500,5" fill="#000"/><polygon points="5.500,13.2 8.500,10 2.500,10" fill="#000"/></svg>
<div class="t" style="left:889px;top:303px">分段:</div>
<div class="sunk" style="left:923px;top:303px;width:57px;height:14px;box-shadow:inset 1px 1px 0 #808080"></div>
<div class="t m" style="left:926px;top:303px;letter-spacing:-0.8px;font-size:11px">1</div>
<div class="a" style="left:982px;top:303px;width:11px;height:7px;background:#c8c8c8;border:1px solid;border-color:#fff #404040 #404040 #fff"></div>
<div class="a" style="left:982px;top:310px;width:11px;height:7px;background:#c8c8c8;border:1px solid;border-color:#fff #404040 #404040 #fff"></div>
<svg class="a" style="left:982px;top:303px" width="11" height="14"><polygon points="5.500,1.800 8.500,5 2.500,5" fill="#000"/><polygon points="5.500,12.2 8.500,9 2.500,9" fill="#000"/></svg>
<div class="a" style="left:879px;top:277px;width:125px;height:28px;border:2px solid #e82020"></div>
<div class="grp" style="left:852px;top:325px;width:154px;height:63px"></div>
<div class="t" style="left:859px;top:318px;background:#c8c8c8;padding:0 1px">封口</div>
<div class="cb" style="left:900px;top:335px"></div>
<svg class="a" style="left:900px;top:335px" width="13" height="13"><path d="M3,6l2.500,3 4.500,-6" stroke="#000" stroke-width="1.800" fill="none"/></svg>
<div class="t" style="left:916px;top:335px">封口始端</div>
<div class="cb" style="left:900px;top:351px"></div>
<svg class="a" style="left:900px;top:351px" width="13" height="13"><path d="M3,6l2.500,3 4.500,-6" stroke="#000" stroke-width="1.800" fill="none"/></svg>
<div class="t" style="left:916px;top:351px">封口末端</div>
<div class="rad" style="left:877px;top:369px"></div>
<div class="a" style="left:881px;top:373px;width:4px;height:4px;border-radius:50%;background:#000"></div>
<div class="t " style="left:895px;top:368px">变形</div>
<div class="rad" style="left:944px;top:369px"></div>
<div class="t " style="left:962px;top:368px">栅格</div>
<div class="grp" style="left:852px;top:397px;width:154px;height:59px"></div>
<div class="t" style="left:859px;top:390px;background:#c8c8c8;padding:0 1px">输出</div>
<div class="rad" style="left:896px;top:405px"></div>
<div class="t " style="left:914px;top:404px">面片</div>
<div class="rad" style="left:896px;top:422px"></div>
<div class="a" style="left:900px;top:426px;width:4px;height:4px;border-radius:50%;background:#000"></div>
<div class="t " style="left:914px;top:421px">网格</div>
<div class="rad" style="left:896px;top:440px"></div>
<div class="t m" style="left:914px;top:439px">NURBS</div>
<div class="cb" style="left:857px;top:461px"></div>
<svg class="a" style="left:857px;top:461px" width="13" height="13"><path d="M3,6l2.500,3 4.500,-6" stroke="#000" stroke-width="1.800" fill="none"/></svg>
<div class="t" style="left:873px;top:461px">生成贴图坐标</div>
<div class="cb" style="left:857px;top:476px"></div>
<svg class="a" style="left:857px;top:476px" width="13" height="13"><path d="M3,6l2.500,3 4.500,-6" stroke="#000" stroke-width="1.800" fill="none"/></svg>
<div class="t" style="left:873px;top:476px">生成材质 ID</div>
<div class="cb" style="left:873px;top:491px"></div>
<div class="t" style="left:889px;top:491px">使用图形 ID</div>
<div class="cb" style="left:857px;top:507px"></div>
<svg class="a" style="left:857px;top:507px" width="13" height="13"><path d="M3,6l2.500,3 4.500,-6" stroke="#000" stroke-width="1.800" fill="none"/></svg>
<div class="t" style="left:873px;top:507px">平滑</div>
<div class="t" style="left:6px;top:22px">文件(<u>F</u>)</div>
<div class="t" style="left:59px;top:22px">编辑(<u>E</u>)</div>
<div class="t" style="left:114px;top:22px">工具(<u>T</u>)</div>
<div class="t" style="left:168px;top:22px">组(<u>G</u>)</div>
<div class="t" style="left:210px;top:22px">视图(<u>V</u>)</div>
<div class="t" style="left:264px;top:22px">创建(<u>C</u>)</div>
<div class="t" style="left:318px;top:22px">修改器(<u>O</u>)</div>
<div class="t" style="left:384px;top:22px">角色(<u>H</u>)</div>
<div class="t" style="left:438px;top:22px"><span class="m">reactor</span></div>
<div class="t" style="left:492px;top:22px">动画(<u>A</u>)</div>
<div class="t" style="left:546px;top:22px">图表编辑器(<u>D</u>)</div>
<div class="t" style="left:635px;top:22px">渲染(<u>R</u>)</div>
<div class="t" style="left:690px;top:22px">自定义(<u>U</u>)</div>
<div class="t" style="left:755px;top:22px"><span class="m">MAXScript</span>(<u>M</u>)</div>
<div class="t" style="left:839px;top:22px">帮助(<u>H</u>)</div>
<svg class="a" style="left:2px;top:1px" width="16" height="16" viewBox="0 0 16 16"><rect x="0.500" y="0.500" width="15" height="15" rx="3" fill="#1c3f8a" stroke="#cfe0f8" stroke-width="1.500"/><path d="M11,4.500C8,3 4,4.500 4.500,8C5,11 9.500,11.500 10.500,9C11,7 8,6.500 7.500,8" stroke="#e8f0ff" stroke-width="1.600" fill="none"/></svg>
<div class="a" style="left:972px;top:2px;width:16px;height:14px;background:#d4d0c8;border:1px solid;border-color:#fff #404040 #404040 #fff;box-shadow:inset -1px -1px 0 #808080"></div>
<div class="a" style="left:975px;top:11px;width:6px;height:2px;background:#000"></div>
<div class="a" style="left:988px;top:2px;width:16px;height:14px;background:#d4d0c8;border:1px solid;border-color:#fff #404040 #404040 #fff;box-shadow:inset -1px -1px 0 #808080"></div>
<div class="a" style="left:993px;top:4px;width:6px;height:6px;border:1px solid #000;border-top-width:2px"></div>
<div class="a" style="left:991px;top:7px;width:6px;height:6px;border:1px solid #000;border-top-width:2px;background:#d4d0c8"></div>
<div class="a" style="left:1006px;top:2px;width:16px;height:14px;background:#d4d0c8;border:1px solid;border-color:#fff #404040 #404040 #fff;box-shadow:inset -1px -1px 0 #808080"></div>
<svg class="a" style="left:1006px;top:2px" width="16" height="14"><path d="M4,3L11,10M11,3L4,10" stroke="#000" stroke-width="1.700"/></svg>
<div class="a" style="left:0;top:38px;width:1024px;height:1px;background:#f0f0f0"></div>
<div class="a" style="left:0;top:75px;width:1024px;height:1px;background:#909090"></div>
<div class="a" style="left:100px;top:42px;width:31px;height:31px;background:#eec848;border:1px solid;border-color:#808080 #f8f8f8 #f8f8f8 #808080"></div>
<div class="a" style="left:811px;top:42px;width:31px;height:31px;background:#eec848;border:1px solid;border-color:#808080 #f8f8f8 #f8f8f8 #808080"></div>
<svg class="a" style="left:0;top:38px" width="1024" height="38" viewBox="0 38 1024 38">
<defs><linearGradient id="mg" x1="0" y1="0" x2="1" y2="1"><stop offset="0" stop-color="#f08080"/><stop offset="1" stop-color="#c02020"/></linearGradient>
<radialGradient id="tp" cx="0.4" cy="0.3" r="0.8"><stop offset="0" stop-color="#a8e0e0"/><stop offset="0.5" stop-color="#409898"/><stop offset="1" stop-color="#104848"/></radialGradient></defs>
<path d="M3.500,41v33 M6.500,41v33" stroke="#808080"/><path d="M4.500,41v33 M7.500,41v33" stroke="#f4f4f4"/>
<path d="M96.5,43v28" stroke="#808080"/><path d="M97.5,43v28" stroke="#f4f4f4"/>
<path d="M300.5,43v28" stroke="#808080"/><path d="M301.5,43v28" stroke="#f4f4f4"/>
<path d="M338.5,43v28" stroke="#808080"/><path d="M339.5,43v28" stroke="#f4f4f4"/>
<path d="M472.5,43v28" stroke="#808080"/><path d="M473.5,43v28" stroke="#f4f4f4"/>
<path d="M630.5,43v28" stroke="#808080"/><path d="M631.5,43v28" stroke="#f4f4f4"/>
<path d="M700.5,43v28" stroke="#808080"/><path d="M701.5,43v28" stroke="#f4f4f4"/>
<path d="M738.5,43v28" stroke="#808080"/><path d="M739.5,43v28" stroke="#f4f4f4"/>
<path d="M808.5,43v28" stroke="#808080"/><path d="M809.5,43v28" stroke="#f4f4f4"/>
<path d="M846.5,43v28" stroke="#808080"/><path d="M847.5,43v28" stroke="#f4f4f4"/>
<path d="M9,47h11 M9,50h7 M9,53h4 M9,56h3 M9,59h3 M9,62h3 M9,65h3 M9,68h3" stroke="#000" stroke-width="1.300"/><path d="M16,52v14l3,-3 2.500,6 2,-1 -2.500,-6h4z" fill="#e8e8e8" stroke="#606060" stroke-width="0.800"/>
<rect x="35.500" y="47.500" width="20" height="20" fill="none" stroke="#000" stroke-width="2" stroke-dasharray="2 2"/><rect x="38" y="50" width="15" height="15" fill="#e8e8f0" stroke="#a0a0a8"/><path d="M59,71v3h-3z" fill="#000"/>
<rect x="67.500" y="47.500" width="17" height="20" fill="none" stroke="#000" stroke-width="2" stroke-dasharray="2 2"/><rect x="70" y="50" width="13" height="15" fill="#e0e0e8"/><circle cx="83" cy="57" r="5.500" fill="#202020"/><circle cx="83" cy="57" r="1.500" fill="#fff"/>
<path d="M115.500,49v16 M107.500,57h16" stroke="#3c2c24" stroke-width="2"/><path d="M115.500,46.500l3.800,5h-7.600z M115.500,67.500l3.800,-5h-7.600z M105,57l5,-3.800v7.600z M126,57l-5,-3.800v7.600z" fill="#94705e" stroke="#4a342a" stroke-width="0.700"/>
<path d="M141,50a9,9 0 1 0 11,0" stroke="#505050" stroke-width="3.500" fill="none"/><path d="M141.500,51a8,8 0 0 0 -2,8" stroke="#b0b0b0" stroke-width="1.200" fill="none"/><path d="M146,48l8,-2 -1,8z" fill="#404040"/>
<rect x="171" y="49" width="16" height="16" fill="#706868"/><rect x="172" y="57" width="8" height="8" fill="#fff0f4" stroke="#e8a0b0"/><path d="M192,71v3h-3z" fill="#000"/>
<rect x="272" y="47" width="7" height="16" fill="#606870" stroke="#303030"/><rect x="282" y="47" width="7" height="10" fill="#e0e4f0" stroke="#404060"/><circle cx="275.500" cy="63" r="2.500" fill="#e02020"/><circle cx="285.500" cy="58" r="2.500" fill="#e02020"/><path d="M271,63a4.500,4.500 0 0 0 9,0 M281,58a4.500,4.500 0 0 0 9,0" stroke="#c04040" fill="none" stroke-width="0.800"/><path d="M299,71v3h-3z" fill="#000"/>
<path d="M312,60l14,-5 M319,58l-1,-8 M319,58l2,8" stroke="#606060" stroke-width="1.500"/><circle cx="318" cy="49" r="2.800" fill="#e8d840"/><circle cx="311" cy="61" r="2.800" fill="#d0d0d0"/><circle cx="326" cy="55" r="2.800" fill="#e0e0e0"/><circle cx="321" cy="66" r="2.800" fill="#c8c8c8"/>
<g transform="translate(344.5,51)"><path d="M8.500,15L2.500,7.500a4.600,4.600 0 0 1 7.500,-5.500L15,9" stroke="#e05c5c" stroke-width="3.400" fill="none"/><path d="M9.800,14L4,6.800a3,3 0 0 1 4.800,-3.600L13.700,10" stroke="#7a3030" stroke-width="0.800" fill="none"/><path d="M1.500,8a5.500,5.500 0 0 1 2,-7" stroke="#f4a0a0" stroke-width="1" fill="none"/><rect x="7.300" y="14" width="2.600" height="2.600" fill="#fff"/><rect x="13.800" y="8.300" width="2.600" height="2.600" fill="#fff"/></g>
<g transform="translate(376.5,51)"><path d="M8.500,15L2.500,7.500a4.600,4.600 0 0 1 7.500,-5.500L15,9" stroke="#e05c5c" stroke-width="3.400" fill="none"/><path d="M9.800,14L4,6.800a3,3 0 0 1 4.800,-3.600L13.700,10" stroke="#7a3030" stroke-width="0.800" fill="none"/><path d="M1.500,8a5.500,5.500 0 0 1 2,-7" stroke="#f4a0a0" stroke-width="1" fill="none"/><rect x="7.300" y="14" width="2.600" height="2.600" fill="#fff"/><rect x="13.800" y="8.300" width="2.600" height="2.600" fill="#fff"/></g>
<g transform="translate(408.5,51)"><path d="M8.500,15L2.500,7.500a4.600,4.600 0 0 1 7.500,-5.500L15,9" stroke="#e05c5c" stroke-width="3.400" fill="none"/><path d="M9.800,14L4,6.800a3,3 0 0 1 4.800,-3.600L13.700,10" stroke="#7a3030" stroke-width="0.800" fill="none"/><path d="M1.500,8a5.500,5.500 0 0 1 2,-7" stroke="#f4a0a0" stroke-width="1" fill="none"/><rect x="7.300" y="14" width="2.600" height="2.600" fill="#fff"/><rect x="13.800" y="8.300" width="2.600" height="2.600" fill="#fff"/></g>
<g transform="translate(440.5,51)"><path d="M8.500,15L2.500,7.500a4.600,4.600 0 0 1 7.500,-5.500L15,9" stroke="#e05c5c" stroke-width="3.400" fill="none"/><path d="M9.800,14L4,6.800a3,3 0 0 1 4.800,-3.600L13.700,10" stroke="#7a3030" stroke-width="0.800" fill="none"/><path d="M1.500,8a5.500,5.500 0 0 1 2,-7" stroke="#f4a0a0" stroke-width="1" fill="none"/><rect x="7.300" y="14" width="2.600" height="2.600" fill="#fff"/><rect x="13.800" y="8.300" width="2.600" height="2.600" fill="#fff"/></g>
<text x="353.500" y="52" font-family="Liberation Sans" font-weight="bold" font-size="9.500" fill="#000">2.5</text><path d="M368,71v3h-3z" fill="#000"/>
<path d="M377,64.500h24 M379,64.500l12,-19 M391,49a17,17 0 0 1 6.500,13" stroke="#000" stroke-width="1.200" fill="none"/><path d="M389.500,47.500l4.500,1 -2.500,3.500z M398.500,64l-3.500,-3.500 4.500,-1z" fill="#000"/>
<text x="419.500" y="55" font-family="Liberation Sans" font-weight="bold" font-size="13" fill="#000">%</text>
<rect x="455.500" y="45.500" width="8" height="16" fill="#d8d8d8" stroke="#606060"/><path d="M459.500,47l3,4h-6z M459.500,60l3,-4h-6z" fill="#000"/>
<text x="478" y="58" font-family="Liberation Mono" font-size="13" fill="#404040">{}</text><text x="479" y="68" font-family="Liberation Sans" font-weight="bold" font-size="6.500" fill="#404040">ABC</text><path d="M494,49v15l3,-3 2.500,6 2,-1 -2.500,-6h4z" fill="#e8e8e8" stroke="#707070" stroke-width="0.800"/>
<path d="M639,46v18l8,-9z" fill="#305860" stroke="#102020"/><path d="M659,46v18l-8,-9z" fill="#a0b8c0" stroke="#506068"/><path d="M649,43v26" stroke="#e04040" stroke-width="1.300"/>
<path d="M670,57l8,-8 8,8 -8,8z" fill="#305860" stroke="#102020"/><path d="M681,48l8,-5 5,6 -8,6z" fill="#b8c8d0" stroke="#506068"/><path d="M679,66l14,-12" stroke="#e06060" stroke-width="1.300"/><path d="M696,71v3h-3z" fill="#000"/>
<path d="M708,62l10,-4 14,4 -10,4z" fill="#fff" stroke="#000" stroke-width="1.200"/>
<path d="M708,57l10,-4 14,4 -10,4z" fill="#fff" stroke="#000" stroke-width="1.200"/>
<path d="M708,52l10,-4 14,4 -10,4z" fill="#fff" stroke="#000" stroke-width="1.200"/>
<rect x="745.500" y="47.500" width="22" height="18" fill="#f4f4f4" stroke="#2030a0"/><rect x="745.500" y="47.500" width="22" height="3" fill="#2030a0"/><path d="M747,53h5 M747,56h5 M747,59h5 M747,62h5" stroke="#2030a0"/><path d="M754,62c3,-8 6,-8 12,-4" stroke="#c06020" fill="none"/><path d="M753,51v14 M753,58h14" stroke="#b0b0b0" stroke-width="0.600"/>
<rect x="777.500" y="46.500" width="21" height="21" fill="#c8c8c8" stroke="#202020" stroke-width="1.400"/><rect x="780" y="49" width="16" height="5" fill="#f0e040" stroke="#202020"/><rect x="780" y="60" width="16" height="5" fill="#b0b0b0" stroke="#202020"/><path d="M788,54v5 M785,57l3,3 3,-3" stroke="#d02020" stroke-width="1.500" fill="none"/>
<circle cx="821" cy="53" r="5" fill="#182060" stroke="#182060" stroke-width="1.500"/>
<circle cx="820" cy="51.8" r="2.800" fill="#8090d0" opacity="0.850"/>
<circle cx="833" cy="52" r="5" fill="#606060" stroke="#606060" stroke-width="1.500"/>
<circle cx="832" cy="50.8" r="2.800" fill="#ffffff" opacity="0.850"/>
<circle cx="821" cy="64" r="5" fill="#104830" stroke="#104830" stroke-width="1.500"/>
<circle cx="820" cy="62.8" r="2.800" fill="#60c090" opacity="0.850"/>
<circle cx="833" cy="64" r="5" fill="#601010" stroke="#601010" stroke-width="1.500"/>
<circle cx="832" cy="62.8" r="2.800" fill="#e07070" opacity="0.850"/>
<rect x="853.500" y="45.500" width="14" height="9" fill="#f8f8ff" stroke="#2030a0"/><rect x="853.500" y="45.500" width="14" height="3" fill="#2030a0"/>
<g transform="translate(866,62) scale(1)"><path d="M-8,-1c-5,-3 -5,4 0,4 M8,-1l5,-3v3l-5,4" stroke="#205858" stroke-width="1.500" fill="none"/><ellipse cx="0" cy="1" rx="8.500" ry="6.500" fill="url(#tp)" stroke="#104040" stroke-width="0.800"/><ellipse cx="0" cy="-5" rx="3" ry="1.500" fill="#70b8b8" stroke="#104040" stroke-width="0.600"/><circle cx="0" cy="-7" r="1.200" fill="#409090"/></g>
<g transform="translate(1004,61) scale(1)"><path d="M-8,-1c-5,-3 -5,4 0,4 M8,-1l5,-3v3l-5,4" stroke="#205858" stroke-width="1.500" fill="none"/><ellipse cx="0" cy="1" rx="8.500" ry="6.500" fill="url(#tp)" stroke="#104040" stroke-width="0.800"/><ellipse cx="0" cy="-5" rx="3" ry="1.500" fill="#70b8b8" stroke="#104040" stroke-width="0.600"/><circle cx="0" cy="-7" r="1.200" fill="#409090"/></g>
<path d="M1019,71v3h-3z" fill="#000"/>
</svg>
<div class="sunk" style="left:195px;top:43px;width:68px;height:19px;background:#e0e0e0;border-color:#606060 #fff #fff #606060;box-shadow:inset 1px 1px 0 #404040"></div>
<div class="t" style="left:200px;top:46px">视图</div>
<div class="a" style="left:245px;top:45px;width:16px;height:15px;background:#d4d0c8;border:1px solid;border-color:#fff #404040 #404040 #fff;box-shadow:inset -1px -1px 0 #808080"></div>
<svg class="a" style="left:0;top:0" width="1024" height="742"><polygon points="249,50.5 257,50.5 253,55" fill="#000"/></svg>
<div class="sunk" style="left:507px;top:43px;width:119px;height:19px;background:#e0e0e0;border-color:#606060 #fff #fff #606060;box-shadow:inset 1px 1px 0 #404040"></div>
<div class="a" style="left:608px;top:45px;width:16px;height:15px;background:#d4d0c8;border:1px solid;border-color:#fff #404040 #404040 #fff;box-shadow:inset -1px -1px 0 #808080"></div>
<svg class="a" style="left:0;top:0" width="1024" height="742"><polygon points="612,50.5 620,50.5 616,55" fill="#000"/></svg>
<div class="sunk" style="left:881px;top:43px;width:109px;height:19px;background:#e0e0e0;border-color:#606060 #fff #fff #606060;box-shadow:inset 1px 1px 0 #404040"></div>
<div class="t" style="left:886px;top:46px">视图</div>
<div class="a" style="left:972px;top:45px;width:16px;height:15px;background:#d4d0c8;border:1px solid;border-color:#fff #404040 #404040 #fff;box-shadow:inset -1px -1px 0 #808080"></div>
<svg class="a" style="left:0;top:0" width="1024" height="742"><polygon points="976,50.5 984,50.5 980,55" fill="#000"/></svg>
<svg class="a" style="left:440px;top:120px" width="480" height="590" viewBox="440 120 480 590">
<rect x="523.500" y="129.500" width="70" height="69" stroke="#e82020" stroke-width="2" fill="none"/>
<rect x="605.500" y="186.500" width="67" height="21" stroke="#e82020" stroke-width="2" fill="none"/>
<rect x="554" y="355" width="162" height="37.500" stroke="#e82020" stroke-width="2" fill="none"/>
<rect x="472.500" y="628.500" width="438" height="66" stroke="#e82020" stroke-width="2" fill="none"/>
<path d="M542,171L588,356" stroke="#e82020" stroke-width="1.800" fill="none"/><path d="M590.500,363.500C586,358 583,352 585,348L595,347C596,352 593,358 590.500,363.500z" fill="#e82020"/>
</svg>
<div class="a" style="left:610px;top:194px;width:49px;height:14px;background:#ffffe1;border:1px solid #000"></div>
<div class="t" style="left:614px;top:194px;word-spacing:-1px">玻璃 - 1</div>
<svg class="a" style="left:609px;top:168px" width="14" height="22"><path d="M1.500,1.500v15l3.500,-3.500 2.500,6 2.500,-1 -2.500,-6h5z" fill="#fff" stroke="#000" stroke-width="1"/></svg>
<div class="t" style="left:485px;top:635px;font-family:'Liberation Serif',serif;font-weight:bold;color:#e82020;font-size:22px;line-height:26px">给门和玻璃分别给不同的材质，一定要起名</div>
<div class="t" style="left:485px;top:662px;font-family:'Liberation Serif',serif;font-weight:bold;color:#e82020;font-size:22px;line-height:26px">啊！</div>
</div></body></html>
